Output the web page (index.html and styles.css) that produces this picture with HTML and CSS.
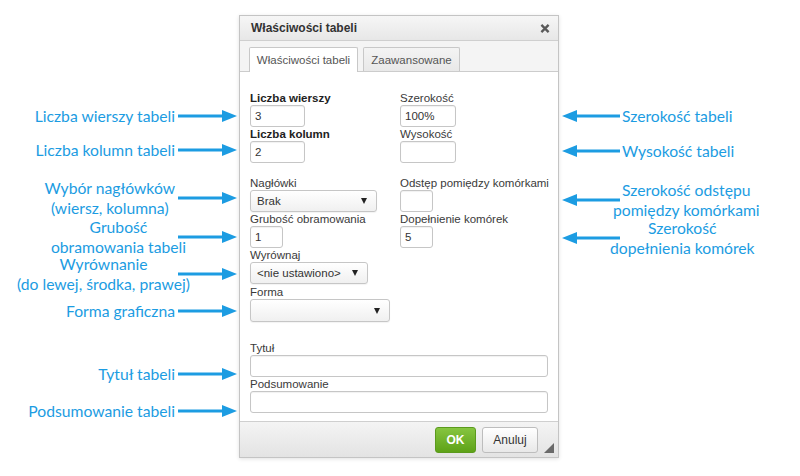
FILE: index.html
```html
<!DOCTYPE html>
<html lang="pl">
<head>
<meta charset="utf-8">
<title>Właściwości tabeli</title>
<link rel="stylesheet" href="styles.css">
</head>
<body>
<div class="stage">
  <div class="notes notes-left">
    <div class="note n1"><span class="txt">Liczba wierszy tabeli</span><svg class="arr" viewBox="0 0 59 14"><path d="M0 7H46"/><polygon points="44,1 59,7 44,13"/></svg></div>
    <div class="note n2"><span class="txt">Liczba kolumn tabeli</span><svg class="arr" viewBox="0 0 59 14"><path d="M0 7H46"/><polygon points="44,1 59,7 44,13"/></svg></div>
    <div class="note n3"><span class="txt">Wybór nagłówków<br>(wiersz, kolumna)</span><svg class="arr" viewBox="0 0 59 14"><path d="M0 7H46"/><polygon points="44,1 59,7 44,13"/></svg></div>
    <div class="note n4"><span class="txt">Grubość<br>obramowania tabeli</span><svg class="arr" viewBox="0 0 59 14"><path d="M0 7H46"/><polygon points="44,1 59,7 44,13"/></svg></div>
    <div class="note n5"><span class="txt">Wyrównanie<br>(do lewej, środka, prawej)</span><svg class="arr" viewBox="0 0 59 14"><path d="M0 7H46"/><polygon points="44,1 59,7 44,13"/></svg></div>
    <div class="note n6"><span class="txt">Forma graficzna</span><svg class="arr" viewBox="0 0 59 14"><path d="M0 7H46"/><polygon points="44,1 59,7 44,13"/></svg></div>
    <div class="note n7"><span class="txt">Tytuł tabeli</span><svg class="arr" viewBox="0 0 59 14"><path d="M0 7H46"/><polygon points="44,1 59,7 44,13"/></svg></div>
    <div class="note n8"><span class="txt">Podsumowanie tabeli</span><svg class="arr" viewBox="0 0 59 14"><path d="M0 7H46"/><polygon points="44,1 59,7 44,13"/></svg></div>
  </div>

  <div class="dialog">
    <div class="dlg-head">
      <span class="dlg-title">Właściwości tabeli</span>
      <svg class="close" viewBox="0 0 10 10"><path d="M1 1L9 9M9 1L1 9"/></svg>
    </div>
    <div class="tabs">
      <div class="tab active">Właściwości tabeli</div>
      <div class="tab">Zaawansowane</div>
    </div>
    <div class="dlg-body">
      <div class="grid2">
        <div class="field"><label class="lbl strong">Liczba wierszy</label><input class="inp w55" type="text" value="3"></div>
        <div class="field"><label class="lbl">Szerokość</label><input class="inp w56" type="text" value="100%"></div>
        <div class="field"><label class="lbl strong">Liczba kolumn</label><input class="inp w55" type="text" value="2"></div>
        <div class="field"><label class="lbl">Wysokość</label><input class="inp w56" type="text" value=""></div>
      </div>
      <div class="grid2 grp2">
        <div class="field"><label class="lbl">Nagłówki</label><div class="sel w127">Brak<span class="caret"></span></div></div>
        <div class="field"><label class="lbl">Odstęp pomiędzy komórkami</label><input class="inp w33" type="text" value=""></div>
        <div class="field"><label class="lbl">Grubość obramowania</label><input class="inp w33" type="text" value="1"></div>
        <div class="field"><label class="lbl">Dopełnienie komórek</label><input class="inp w33" type="text" value="5"></div>
        <div class="field"><label class="lbl">Wyrównaj</label><div class="sel w118">&lt;nie ustawiono&gt;<span class="caret"></span></div></div>
        <div class="field"></div>
        <div class="field forma"><label class="lbl">Forma</label><div class="sel w140 tall"><span class="caret"></span></div></div>
      </div>
      <div class="grp3">
        <div class="field"><label class="lbl">Tytuł</label><input class="inp wfull" type="text" value=""></div>
        <div class="field"><label class="lbl">Podsumowanie</label><input class="inp wfull" type="text" value=""></div>
      </div>
    </div>
    <div class="dlg-foot">
      <button class="btn ok">OK</button>
      <button class="btn cancel">Anuluj</button>
      <svg class="grip" viewBox="0 0 10 10"><polygon points="10,0 10,10 0,10"/></svg>
    </div>
  </div>

  <div class="notes notes-right">
    <div class="note r1"><svg class="arr" viewBox="0 0 58 14"><polygon points="0,7 15,1 15,13"/><path d="M13 7H58"/></svg><span class="txt">Szerokość tabeli</span></div>
    <div class="note r2"><svg class="arr" viewBox="0 0 58 14"><polygon points="0,7 15,1 15,13"/><path d="M13 7H58"/></svg><span class="txt">Wysokość tabeli</span></div>
    <div class="note r3"><svg class="arr" viewBox="0 0 58 14"><polygon points="0,7 15,1 15,13"/><path d="M13 7H58"/></svg><span class="txt">Szerokość odstępu<br>pomiędzy komórkami</span></div>
    <div class="note r4"><svg class="arr" viewBox="0 0 58 14"><polygon points="0,7 15,1 15,13"/><path d="M13 7H58"/></svg><span class="txt">Szerokość<br>dopełnienia komórek</span></div>
  </div>
</div>
</body>
</html>
```

FILE: styles.css
```css
* { box-sizing: border-box; }

html, body {
  margin: 0;
  padding: 0;
  background: #ffffff;
}

body {
  width: 800px;
  height: 476px;
  overflow: hidden;
  font-family: "Liberation Sans", Arial, sans-serif;
}

.stage {
  display: flex;
  height: 476px;
}

/* ---------- annotations ---------- */
.notes {
  display: flex;
  flex-direction: column;
  padding-top: 106px;
  font-family: Lato, "Open Sans", sans-serif;
  font-size: 15.7px;
  line-height: 20px;
  color: #1c9ce2;
}

.notes-left {
  width: 239px;
  padding-right: 2px;
}

.notes-right {
  flex: 1;
  padding-left: 3px;
}

.note {
  display: flex;
  align-items: center;
}

.notes-left .note { justify-content: flex-end; }
.notes-right .note { justify-content: flex-start; }

.txt {
  text-align: center;
  white-space: nowrap;
}

.notes-left .txt { margin-right: 3px; }
.notes-right .txt { margin-left: 2px; }

.arr {
  flex: none;
  height: 14px;
  fill: #1c9ce2;
  stroke: #1c9ce2;
}
.notes-left .arr { width: 59px; }
.notes-right .arr { width: 58px; }
.arr path { stroke-width: 3; fill: none; }
.arr polygon { stroke: none; }

.n2 { margin-top: 14px; }
.n3 { margin-top: 18px; }
.n4 { margin-top: -1px; }
.n4 .txt { margin-right: -8px; }
.n5 { margin-top: -3px; }
.n5 .txt { margin-right: -12px; }
.n6 { margin-top: 7px; }
.n7 { margin-top: 43px; }
.n8 { margin-top: 17px; }

.r2 { margin-top: 15px; }
.r3 { margin-top: 19px; }
.r3 .txt { margin-left: -7px; }
.r4 { margin-top: -2px; }
.r4 .txt { margin-left: -10px; }

/* ---------- dialog ---------- */
.dialog {
  flex: none;
  width: 320px;
  height: 443px;
  margin-top: 15px;
  border: 1px solid #c4c4c4;
  box-shadow: 0 1px 4px rgba(0, 0, 0, 0.12);
  background: #fff;
  display: flex;
  flex-direction: column;
  font-size: 11.5px;
  color: #333;
}

.dlg-head {
  height: 25px;
  border-bottom: 1px solid #cfcfcf;
  background: linear-gradient(#f6f6f6, #e7e7e7);
  display: flex;
  align-items: center;
  justify-content: space-between;
  padding: 0 8px 0 11px;
}

.dlg-title {
  font-weight: bold;
  font-size: 12px;
  color: #333;
}

.close {
  width: 10px;
  height: 9px;
  stroke: #595959;
  stroke-width: 2.6;
  fill: none;
}

.tabs {
  height: 31px;
  border-bottom: 1px solid #cccccc;
  background: #f4f4f4;
  display: flex;
  align-items: flex-end;
  gap: 5px;
  padding-left: 9px;
}

.tab {
  height: 24px;
  border: 1px solid #c8c8c8;
  border-bottom: none;
  border-radius: 2px 2px 0 0;
  background: linear-gradient(#f4f4f4, #e8e8e8);
  color: #555;
  display: flex;
  align-items: center;
  justify-content: center;
  width: 97px;
}

.tab.active {
  width: 109px;
  height: 25px;
  margin-bottom: -1px;
  background: #ffffff;
  color: #555;
}

.dlg-body {
  flex: 1;
  padding: 19px 10px 0 10px;
}

.grid2 {
  display: grid;
  grid-template-columns: 150px 1fr;
}

.grp2 { margin-top: 13px; }
.grp3 { margin-top: 19px; }
.forma { margin-top: 1px; }

.field { display: flex; flex-direction: column; align-items: flex-start; }

.lbl {
  display: block;
  height: 14px;
  line-height: 14px;
  white-space: nowrap;
  color: #3a3a3a;
}
.lbl.strong { font-weight: bold; color: #222; }

.inp {
  display: block;
  height: 22px;
  margin: 0;
  padding: 0 4px;
  border: 1px solid #c6c6c6;
  border-radius: 3px;
  background: #fff;
  box-shadow: inset 0 1px 1px rgba(0, 0, 0, 0.06);
  font-family: "Liberation Sans", Arial, sans-serif;
  font-size: 11.5px;
  color: #333;
  outline: none;
}

.w55 { width: 55px; }
.w56 { width: 56px; }
.w33 { width: 33px; }
.wfull { width: 298px; }

.sel {
  position: relative;
  height: 22px;
  border: 1px solid #c6c6c6;
  border-radius: 3px;
  background: linear-gradient(#ffffff, #f0f0f0);
  box-shadow: 0 1px 1px rgba(0, 0, 0, 0.05);
  display: flex;
  align-items: center;
  justify-content: space-between;
  padding: 0 9px 0 6px;
  color: #333;
  white-space: nowrap;
}
.sel.tall { height: 23px; }

.w127 { width: 127px; }
.w118 { width: 118px; }
.w140 { width: 140px; }

.caret {
  margin-left: auto;
  width: 0;
  height: 0;
  border-left: 3.5px solid transparent;
  border-right: 3.5px solid transparent;
  border-top: 6px solid #222;
}

.dlg-foot {
  position: relative;
  height: 36px;
  border-top: 1px solid #cfcfcf;
  background: linear-gradient(#f4f4f4, #e3e3e3);
  display: flex;
  align-items: center;
  justify-content: flex-end;
  gap: 6px;
  padding-right: 20px;
}

.btn {
  height: 26px;
  margin: 0;
  padding: 0;
  border-radius: 3px;
  font-family: "Liberation Sans", Arial, sans-serif;
  font-size: 12px;
}

.btn.ok {
  width: 41px;
  border: 1px solid #5b9a1d;
  background: linear-gradient(#86c540, #5ea218);
  color: #fff;
  font-weight: bold;
}

.btn.cancel {
  width: 56px;
  border: 1px solid #bdbdbd;
  background: linear-gradient(#ffffff, #e8e8e8);
  color: #333;
}

.grip {
  position: absolute;
  right: 4px;
  bottom: 4px;
  width: 10px;
  height: 10px;
  fill: #6a6a6a;
}
```
